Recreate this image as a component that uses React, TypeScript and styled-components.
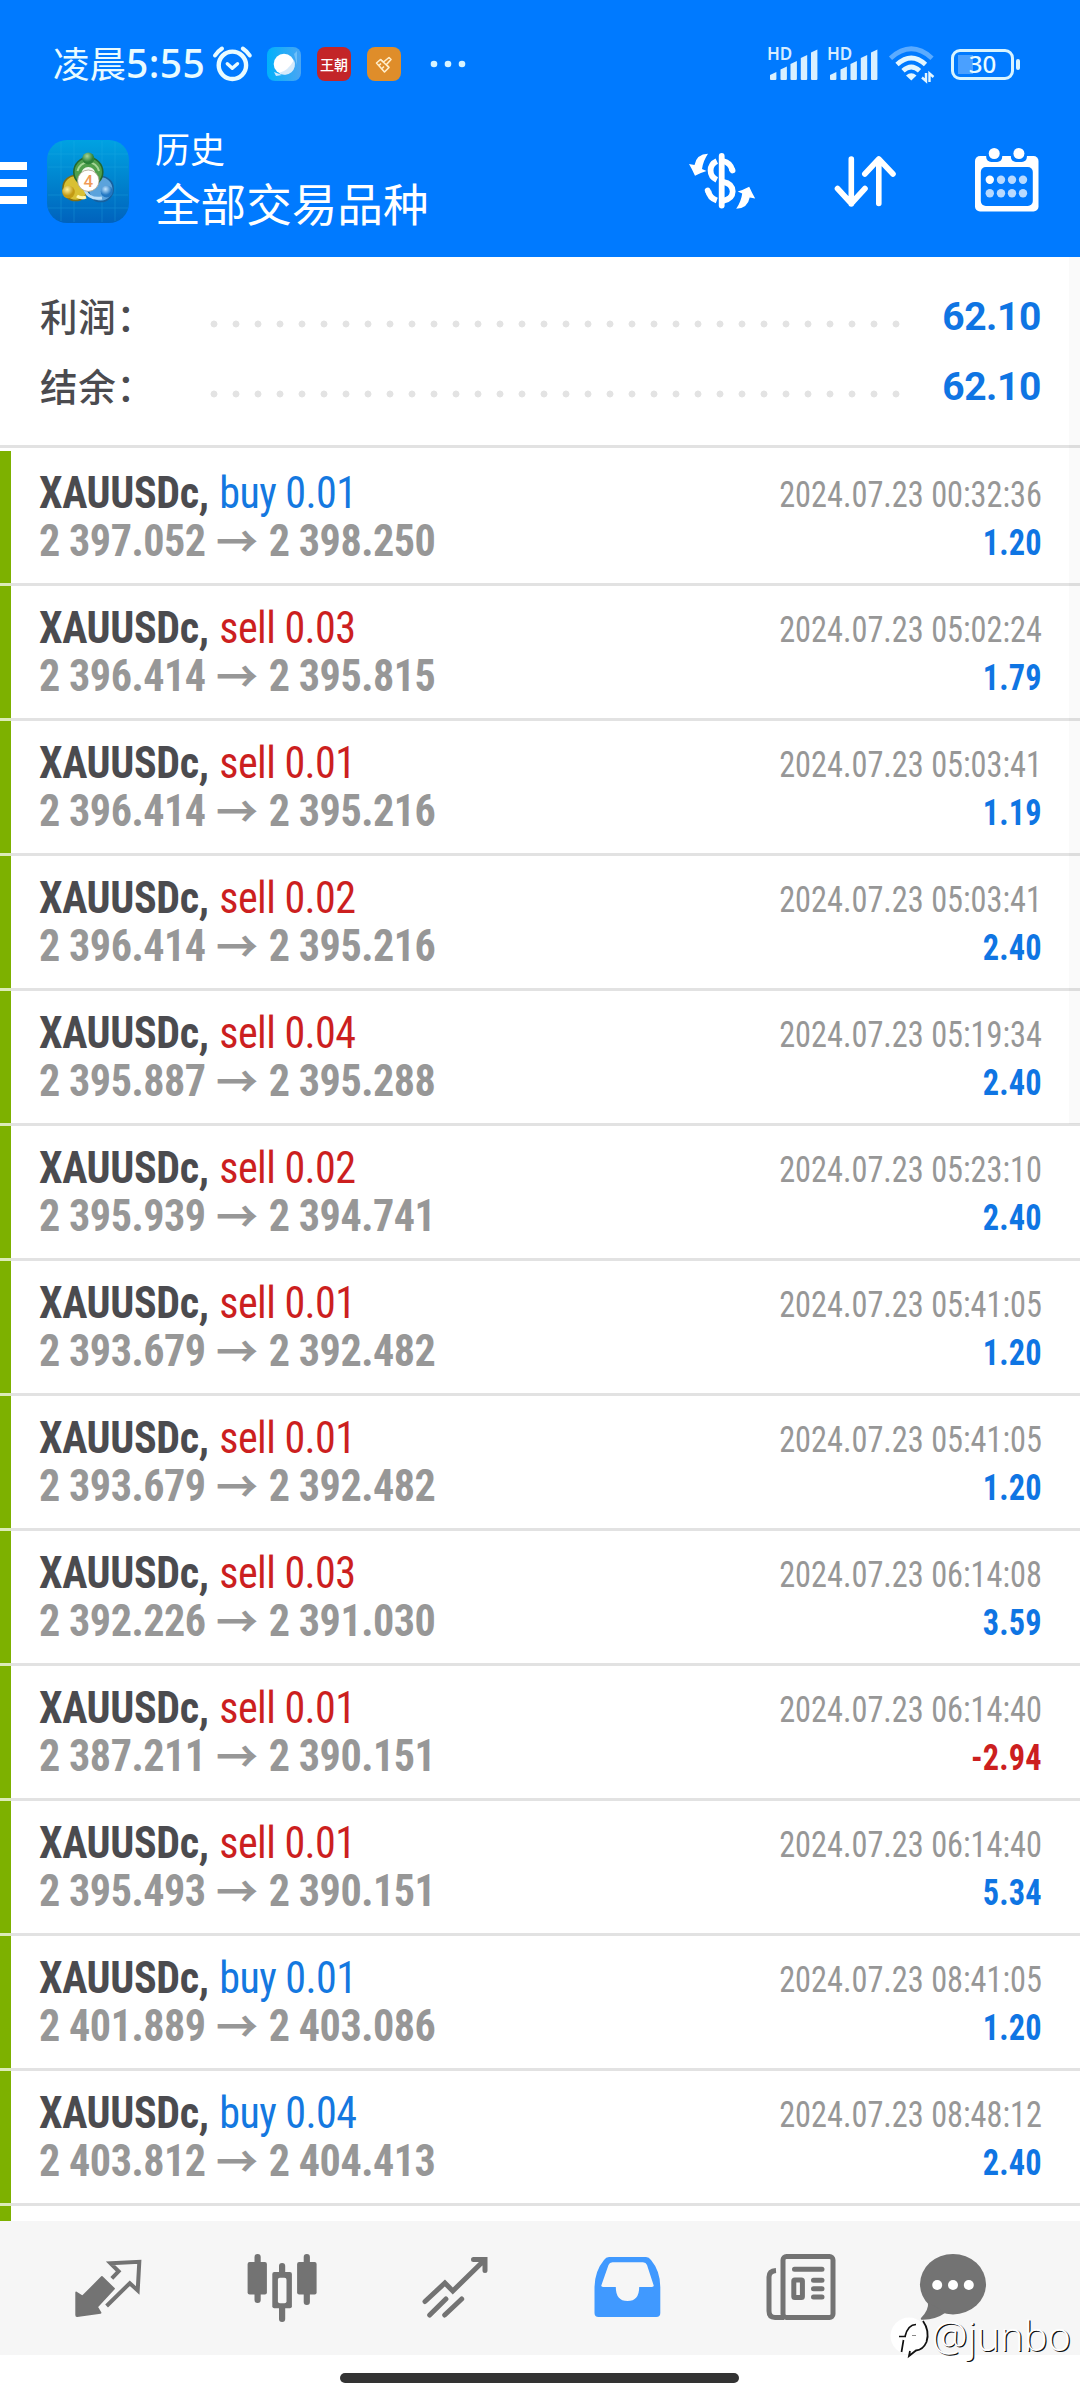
import React from 'react';
import styled, { createGlobalStyle } from 'styled-components';

const condensed = '"Roboto Condensed", Roboto, "Noto Sans CJK SC", sans-serif';
const cjk = '"Noto Sans CJK SC", sans-serif';
const BLUE = '#007aff';
const VALUE_BLUE = '#0f75e3';
const ICON_GREY = '#737373';

const Global = createGlobalStyle`
  html, body { margin: 0; background: #fff; }
  * { box-sizing: border-box; }
  svg { display: block; flex: none; overflow: visible; }
`;

const Screen = styled.div`
  position: relative;
  display: flex;
  flex-direction: column;
  width: 1080px;
  height: 2400px;
  overflow: hidden;
  background: #fff;
`;

const TopArea = styled.header`
  height: 257px;
  flex: none;
  background: ${BLUE};
  color: #fff;
`;

const StatusBar = styled.div`
  display: flex;
  align-items: center;
  height: 128px;
  padding: 0 59px 0 53px;
`;

const Clock = styled.div`
  display: flex;
  align-items: center;
  width: 159px;
  white-space: nowrap;
  color: #e9fbff;
`;

const ClockPrefix = styled.span`
  width: 73px;
  font: 400 36.5px/48px ${cjk};
  margin-top: -2px;
`;

const ClockDigits = styled.span`
  font: 500 39px/48px "Noto Sans", sans-serif;
  letter-spacing: 0.4px;
  margin-top: -2px;
`;

const MiniApps = styled.div`
  display: flex;
  gap: 16px;
  margin-left: 14px;
`;

const MiniApp = styled.div<{ $bg: string }>`
  display: flex;
  align-items: center;
  justify-content: center;
  width: 34px;
  height: 34px;
  border-radius: 8px;
  background: ${p => p.$bg};
  font: 500 14px/34px ${cjk};
  white-space: nowrap;
`;

const StatusRight = styled.div`
  display: flex;
  align-items: center;
  margin-left: auto;
`;

const Signal = styled.div`
  position: relative;
  width: 60px;
  height: 34px;
`;

const HdLabel = styled.span`
  position: absolute;
  left: -1px;
  top: -1px;
  font: 600 17px/16px "Noto Sans", sans-serif;
  color: #d5ecff;
`;

const Battery = styled.div`
  position: relative;
  display: flex;
  align-items: center;
  justify-content: center;
  width: 63px;
  height: 31px;
  margin: 0 7px 0 15px;
  border: 3px solid #d8f4ff;
  border-radius: 9px;
  background: linear-gradient(#4aa0ff, #4aa0ff) 4px 3px / 15px 19px no-repeat;
  font: 500 24px/24px "Noto Sans", sans-serif;
  color: #e9fbff;

  &::after {
    content: '';
    position: absolute;
    right: -9px;
    top: 7px;
    width: 4px;
    height: 11px;
    border-radius: 2px;
    background: #d8f4ff;
  }
`;

const TitleBar = styled.div`
  display: flex;
  align-items: flex-start;
  height: 129px;
`;

const MenuButton = styled.div`
  display: flex;
  flex-direction: column;
  gap: 9px;
  width: 27px;
  padding-top: 34px;
`;

const MenuLine = styled.span`
  height: 8px;
  background: #fff;
`;

const Logo = styled.div`
  margin: 12px 0 0 20px;
`;

const Titles = styled.div`
  width: 532px;
  padding-left: 26px;
  margin-top: -2px;
  white-space: nowrap;
`;

const Subtitle = styled.div`
  font: 400 35px/44px ${cjk};
`;

const Title = styled.div`
  margin-top: 3px;
  font: 400 45.6px/58px ${cjk};
`;

const Tools = styled.div`
  display: flex;
  align-items: flex-start;
`;

const Tool = styled.div<{ $left: number; $top: number }>`
  margin: ${p => p.$top}px 0 0 ${p => p.$left}px;
`;

const Summary = styled.section`
  display: flex;
  flex-direction: column;
  flex: none;
  height: 191px;
  padding: 24px 39px 0 40px;
  border-bottom: 3px solid #e2e2e2;
`;

const SummaryRow = styled.div`
  display: flex;
  align-items: center;
  height: 70px;
`;

const SummaryLabel = styled.div`
  width: 169px;
  margin-top: -3px;
  font: 500 37.5px/50px ${cjk};
  letter-spacing: 0.8px;
  color: #4b4b4f;
  white-space: nowrap;
`;

const Leader = styled.div`
  width: 704px;
  height: 8px;
  margin-top: 15px;
  background: radial-gradient(circle, #e3e3e3 3.1px, transparent 3.8px) -6px 0 / 22px 8px repeat-x;
`;

const SummaryValue = styled.div`
  margin: 2px 0 0 auto;
  font: 700 39px/50px Roboto, sans-serif;
  letter-spacing: -0.4px;
  color: ${VALUE_BLUE};
  white-space: nowrap;
`;

const List = styled.main`
  display: flex;
  flex-direction: column;
  height: 1773px;
  padding-top: 3px;
  overflow: hidden;
`;

const DealStripe = styled.div`
  flex: none;
  height: 3px;
  background: linear-gradient(90deg, #dcebb8 11px, #e2e2e2 11px);
`;

const DealRow = styled.article`
  display: flex;
  flex: none;
  justify-content: space-between;
  height: 132px;
  padding: 18px 38px 0 28px;
  border-left: 11px solid #7db100;
`;

const DealInfo = styled.div`
  transform: scaleX(0.957);
  transform-origin: 0 0;
  white-space: nowrap;
`;

const DealResult = styled.div`
  padding-top: 2px;
  text-align: right;
  transform: scaleX(0.897);
  transform-origin: 100% 0;
  white-space: nowrap;
`;

const Instrument = styled.div`
  font: 700 44px/48px ${condensed};
  letter-spacing: -0.4px;
  color: #4b4b4f;
`;

const Order = styled.span<{ $sell: boolean }>`
  margin-left: 1.5px;
  font-weight: 400;
  letter-spacing: -0.6px;
  color: ${p => (p.$sell ? '#cc1f1f' : '#1478e0')};
`;

const Prices = styled.div`
  display: flex;
  font: 700 44px/48px ${condensed};
  letter-spacing: -0.5px;
  color: #979797;
`;

const Arrow = styled.span`
  width: 66px;
  text-align: center;
  font: 700 44px/44px ${cjk};
  letter-spacing: 0;
`;

const Time = styled.div`
  font: 400 36px/48px ${condensed};
  color: #979797;
`;

const Profit = styled.div<{ $loss: boolean }>`
  font: 700 36px/48px ${condensed};
  letter-spacing: 0.2px;
  color: ${p => (p.$loss ? '#cc1f1f' : VALUE_BLUE)};
`;

const ScrollThumb = styled.div`
  position: absolute;
  right: 0;
  top: 257px;
  width: 11px;
  height: 867px;
  background: rgba(0, 0, 0, 0.02);
`;

const NavBar = styled.nav`
  display: grid;
  grid-template-columns: repeat(5, 173px) 133px;
  justify-items: center;
  flex: none;
  height: 134px;
  padding: 33px 0 0 22px;
  background: #f6f6f6;
`;

const HomeArea = styled.footer`
  display: flex;
  justify-content: center;
  padding: 18px 2px 0 0;
`;

const HomeBar = styled.div`
  width: 399px;
  height: 10px;
  border-radius: 5px;
  background: #333;
`;

const Watermark = styled.div`
  position: absolute;
  left: 890px;
  top: 2311px;
  display: flex;
  align-items: center;
  height: 52px;
  font: 300 40px/52px "Open Sans", "Noto Sans", sans-serif;
  color: #fff;
  text-shadow: 1.2px 1.2px 0.6px #111;
  white-space: nowrap;
`;

const WatermarkName = styled.span`
  margin: -3px 0 0 3px;
`;

type DealData = [side: 'buy' | 'sell', lots: string, open: string, close: string, time: string, profit: string];

const deals: DealData[] = [
  ['buy', '0.01', '2 397.052', '2 398.250', '2024.07.23 00:32:36', '1.20'],
  ['sell', '0.03', '2 396.414', '2 395.815', '2024.07.23 05:02:24', '1.79'],
  ['sell', '0.01', '2 396.414', '2 395.216', '2024.07.23 05:03:41', '1.19'],
  ['sell', '0.02', '2 396.414', '2 395.216', '2024.07.23 05:03:41', '2.40'],
  ['sell', '0.04', '2 395.887', '2 395.288', '2024.07.23 05:19:34', '2.40'],
  ['sell', '0.02', '2 395.939', '2 394.741', '2024.07.23 05:23:10', '2.40'],
  ['sell', '0.01', '2 393.679', '2 392.482', '2024.07.23 05:41:05', '1.20'],
  ['sell', '0.01', '2 393.679', '2 392.482', '2024.07.23 05:41:05', '1.20'],
  ['sell', '0.03', '2 392.226', '2 391.030', '2024.07.23 06:14:08', '3.59'],
  ['sell', '0.01', '2 387.211', '2 390.151', '2024.07.23 06:14:40', '-2.94'],
  ['sell', '0.01', '2 395.493', '2 390.151', '2024.07.23 06:14:40', '5.34'],
  ['buy', '0.01', '2 401.889', '2 403.086', '2024.07.23 08:41:05', '1.20'],
  ['buy', '0.04', '2 403.812', '2 404.413', '2024.07.23 08:48:12', '2.40'],
];

const AlarmIcon = () => (
  <svg width="41" height="38" viewBox="0 0 41 38" fill="none" stroke="#e9fbff" strokeLinecap="round" strokeLinejoin="round">
    <circle cx="20.4" cy="20.3" r="13.7" strokeWidth="4.4" />
    <path d="M15.3 18.7l5 4.6 5.2-4.6" strokeWidth="3.4" />
    <path d="M3 10.500q2.500-4 7-7M37.800 10.500q-2.500-4-7-7" strokeWidth="4" />
  </svg>
);

const GlobeIcon = () => (
  <svg width="34" height="34" viewBox="0 0 34 34">
    <path d="M27 7L30 4 30 18z" fill="#8fd0fb" opacity=".6" />
    <path d="M7 25l2 4 6-1z" fill="#cfeafd" />
    <circle cx="17" cy="17" r="10.300" fill="#fff" />
    <path d="M27 13a10.300 10.300 0 0 1-15 13Q21 24 27 13z" fill="#d5eafb" />
  </svg>
);

const BrushIcon = () => (
  <svg width="34" height="34" viewBox="0 0 34 34" fill="none" stroke="#ffeecb" strokeWidth="1.600" strokeLinejoin="round">
    <path d="M9.500 16L13.500 12.500 16.500 15 22 10.500 24 12.500 19.500 17.500 22 20.500 17.500 25z" />
    <path d="M13.500 12.500L22 20.500M12 18.500l2-2M15 21.500l2-2" />
  </svg>
);

const MoreDots = () => (
  <svg width="36" height="8" viewBox="0 0 36 8" fill="#d8f4ff" style={{ marginLeft: 29 }}>
    <circle cx="4" cy="4" r="3.300" /><circle cx="18" cy="4" r="3.300" /><circle cx="32" cy="4" r="3.300" />
  </svg>
);

const SignalBars = () => (
  <Signal>
    <HdLabel>HD</HdLabel>
    <svg width="60" height="34" viewBox="0 0 60 34" fill="#d8efff">
      {[[2, 25], [12.500, 19.500], [22.500, 14], [32.800, 8], [43, 2.500]].map(([x, y]) => (
        <path key={x} d={`M${x} ${y + 3}L${x + 6.400} ${y}V32q0 1-1 1H${x + 1}q-1 0-1-1z`} />
      ))}
    </svg>
  </Signal>
);

const WifiIcon = () => (
  <svg width="48" height="38" viewBox="0 0 48 38" fill="none" stroke="#e3f6ff" strokeWidth="4.800">
    <path d="M2.500 13.200Q23.300-5.500 44 13.200" opacity=".4" />
    <path d="M9 19.500Q23.300 6.500 37.500 19.500" />
    <path d="M15 25.800Q23.300 18.200 31.500 25.800" />
    <path d="M18 30.500q5.300-4.500 10.500 0l-5.200 5z" fill="#e3f6ff" stroke="none" />
    <path d="M38 28v8l-4-3.500M41.500 37v-8.500l4 3.500" strokeWidth="2.400" />
  </svg>
);

const AppLogo = () => (
  <svg width="82" height="83" viewBox="0 0 82 83">
    <defs>
      <linearGradient id="tile" x1="0" y1="0" x2="0" y2="1">
        <stop offset="0" stopColor="#00a2e2" /><stop offset=".55" stopColor="#0080cc" /><stop offset="1" stopColor="#0062bd" />
      </linearGradient>
      <radialGradient id="green" cx=".4" cy=".3"><stop offset="0" stopColor="#a8d49a" /><stop offset="1" stopColor="#2c8238" /></radialGradient>
      <radialGradient id="gold" cx=".4" cy=".3"><stop offset="0" stopColor="#fff3a0" /><stop offset="1" stopColor="#c39a14" /></radialGradient>
      <radialGradient id="azure" cx=".4" cy=".3"><stop offset="0" stopColor="#c4e6ff" /><stop offset="1" stopColor="#2277c2" /></radialGradient>
    </defs>
    <rect width="82" height="83" rx="20" fill="url(#tile)" />
    <path d="M14 2v79M27 1v81M55 1v81M68 2v79M1 14h80M1 27h80M1 55h80M1 68h80" stroke="#29b4e8" strokeWidth=".8" opacity=".35" />
    <g strokeWidth="1.600">
      <circle cx="53.700" cy="49" r="12.500" fill="#5ba3dc" stroke="#17609e" />
      <circle cx="28.500" cy="48" r="12.500" fill="#d9c033" stroke="#846f10" />
      <circle cx="41.300" cy="32" r="14.500" fill="#4f9f4c" stroke="#23682f" />
      <circle cx="41.300" cy="34" r="7" fill="#eef6ea" stroke="none" />
    </g>
    <path d="M30.500 31a11 11 0 0 1 21.500 0" fill="none" stroke="#a5d696" strokeWidth="2" />
    <path d="M30 56q4 3 9 1" fill="none" stroke="#fff5aa" strokeWidth="3" />
    <path d="M38 50q4 10 17 8" fill="none" stroke="#b9dffa" strokeWidth="3" />
    <circle cx="41.300" cy="18.500" r="6" fill="url(#green)" />
    <circle cx="21.500" cy="52" r="6.300" fill="url(#gold)" />
    <circle cx="59.700" cy="51.500" r="6" fill="url(#azure)" />
    <circle cx="41.300" cy="40.700" r="10.700" fill="#fff" stroke="#aaa18a" strokeWidth=".8" />
    <text x="41.300" y="46.800" textAnchor="middle" fontFamily="Roboto, sans-serif" fontSize="17" fontWeight="500" fill="#f09a58">4</text>
  </svg>
);

const swirl = 'M20 1.700Q8.500 2 6.500 13L1 12Q4 17 7 23.700 13 20.500 18.500 19L14 17Q15 9 20 1.700z';

const DollarIcon = () => (
  <svg width="68" height="58" viewBox="0 0 68 58" fill="#fff">
    <path d={swirl} /><path d={swirl} transform="rotate(180 34.100 29.200)" />
    <g fill="none" stroke="#fff" strokeWidth="5.800">
      <path d="M33.700 4v49.500" strokeLinecap="round" />
      <path d="M28.800 9.200C20.500 13 20.500 24 28.800 27.800" />
      <path d="M28.800 48.500Q21.500 46 20.300 39" />
      <path d="M19.700 38.500l.6 1.500" strokeLinecap="round" />
      <path d="M35 9Q42.500 10.500 44.500 18.500" /><path d="M44 17.500l.5 1" strokeLinecap="round" />
      <path d="M35 29.800Q44.500 31.500 44.700 39.500 44.500 47 35 48.800" />
    </g>
  </svg>
);

const SortIcon = () => (
  <svg width="62" height="53" viewBox="0 0 62 53" fill="none" stroke="#fff" strokeWidth="5.600" strokeLinecap="round" strokeLinejoin="round">
    <path d="M17.300 4v45M3.500 33.500L17.300 48.500 31 33.500M44.800 48.500V4M30.800 19L44.800 4 59 19" />
  </svg>
);

const CalendarIcon = () => (
  <svg width="64" height="65" viewBox="0 0 64 65" fill="#fff">
    <rect y="9" width="63.500" height="55.500" rx="5" />
    <rect x="5.800" y="20" width="52" height="39" rx="5" fill={BLUE} />
    {[19.200, 43.900].map(x => (
      <g key={x}>
        <rect x={x - 8} y="2" width="16" height="13" rx="5" fill={BLUE} />
        <circle cx={x} cy="6.500" r="5.500" />
      </g>
    ))}
    {[32.700, 46.300].map(y => [14.800, 26, 37, 48].map(x => (
      <circle key={`${x}-${y}`} cx={x} cy={y} r="4.200" opacity={x < 15 && y < 33 ? 1 : 0.72} />
    )))}
  </svg>
);

const QuotesIcon = () => (
  <svg width="77" height="66" viewBox="0 0 77 66">
    <path d="M31.900 23L44 34.700 27.100 53 30.500 58.800 7.100 62.200Q6.200 62 6.200 61V38.500L12.500 42.500z" fill={ICON_GREY} stroke={ICON_GREY} strokeWidth="1.800" strokeLinejoin="round" />
    <path d="M41.800 24.300L48.600 17.300 40.500 9.300 69.300 7.800 67.700 36.500 59.800 29.200 36.600 52" fill="none" stroke={ICON_GREY} strokeWidth="4" />
  </svg>
);

const CandlesIcon = () => (
  <svg width="72" height="68" viewBox="0 0 72 68" fill={ICON_GREY}>
    <rect x="8.500" width="6.200" height="49" rx="3" /><rect x="1.600" y="8" width="19.300" height="32.500" rx="2" />
    <rect x="57.700" width="6.200" height="51" rx="3" /><rect x="51.100" y="8" width="19.500" height="32.500" rx="2" />
    <rect x="33" y="9" width="6.200" height="59" rx="3" /><rect x="26.300" y="18" width="19.600" height="36.300" rx="2" />
    <rect x="31.900" y="23.700" width="8.600" height="25.500" rx="2" fill="#f6f6f6" />
  </svg>
);

const TrendIcon = () => (
  <svg width="68" height="66" viewBox="0 0 68 66" fill="none" stroke={ICON_GREY} strokeWidth="5" strokeLinecap="round">
    <path d="M4 47.500L23.900 29 31.800 37 63.500 6M52.500 5.500H64V16.500M8.700 61L24.900 45M23.700 61L40.700 45" />
  </svg>
);

const InboxIcon = () => (
  <svg width="67" height="66" viewBox="0 -3 67 66" fill="#4099ff">
    <path fillRule="evenodd" d="M15 0H52Q55 0 57 3 66.300 14 66.300 30V56Q66.300 60 62.300 60H4.600Q.5 60 .5 56V30Q.8 14 10 3 12 0 15 0zM18.500 5.300Q15.500 5.300 14.500 8L7.300 28.500Q7 30 9 30H21.800Q21.800 44 33.500 44 45.200 44 45.200 30H58Q60 30 59.700 28.500L53 8Q52 5.300 49 5.300z" />
  </svg>
);

const NewsIcon = () => (
  <svg width="70" height="66" viewBox="0 0 70 66" fill="none" stroke={ICON_GREY} strokeWidth="5">
    <rect x="17" y="2.600" width="50" height="60.800" rx="3.500" />
    <path d="M10 16.500Q3 17 3 23V57Q3 63.400 9 63.400H18" />
    <path d="M28.500 15.300H56M47.500 26.300H56M47.500 34.700H56M47.500 43H56" strokeLinecap="round" />
    <rect x="27.800" y="26" width="8.600" height="17.600" rx="1" />
  </svg>
);

const ChatIcon = () => (
  <svg width="67" height="66" viewBox="0 0 67 66" fill={ICON_GREY}>
    <ellipse cx="33" cy="30.200" rx="33" ry="30.200" />
    <path d="M8 48Q9 56 1 64 0 66 3 65.700 16 65.500 25 59z" />
    <g fill="#fff"><circle cx="17.200" cy="31" r="5" /><circle cx="33" cy="31" r="5" /><circle cx="48.800" cy="31" r="5" /></g>
  </svg>
);

const WatermarkBadge = () => (
  <svg width="39" height="42" viewBox="0 0 39 42" fill="none">
    <circle cx="19" cy="20" r="18.500" fill="#fff" />
    <path d="M9 20.500H16M15 20.500Q18 8.500 26 8.500M13.500 24L11.500 36" stroke="#111" strokeWidth="1.700" />
    <path d="M33 5Q40 15 36.500 26 33 34 26 34.500L19 40 20 35" stroke="#111" strokeWidth="1.800" />
    <path d="M22 19.500h4" stroke="#888" />
  </svg>
);

export default function App() {
  return (
    <Screen>
      <Global />
      <TopArea>
        <StatusBar>
          <Clock><ClockPrefix>凌晨</ClockPrefix><ClockDigits>5:55</ClockDigits></Clock>
          <AlarmIcon />
          <MiniApps>
            <MiniApp $bg="linear-gradient(90deg, #00b1fb, #4aa5f3)"><GlobeIcon /></MiniApp>
            <MiniApp $bg="#c32528">王朝</MiniApp>
            <MiniApp $bg="#df8d2a"><BrushIcon /></MiniApp>
          </MiniApps>
          <MoreDots />
          <StatusRight>
            <SignalBars /><SignalBars />
            <WifiIcon />
            <Battery>30</Battery>
          </StatusRight>
        </StatusBar>
        <TitleBar>
          <MenuButton><MenuLine /><MenuLine /><MenuLine /></MenuButton>
          <Logo><AppLogo /></Logo>
          <Titles>
            <Subtitle>历史</Subtitle>
            <Title>全部交易品种</Title>
          </Titles>
          <Tools>
            <Tool $left={27} $top={24}><DollarIcon /></Tool>
            <Tool $left={78} $top={27}><SortIcon /></Tool>
            <Tool $left={79} $top={19}><CalendarIcon /></Tool>
          </Tools>
        </TitleBar>
      </TopArea>
      <Summary>
        {['利润：', '结余：'].map(label => (
          <SummaryRow key={label}>
            <SummaryLabel>{label}</SummaryLabel>
            <Leader />
            <SummaryValue>62.10</SummaryValue>
          </SummaryRow>
        ))}
      </Summary>
      <List>
        {deals.map(([side, lots, open, close, time, profit], i) => (
          <React.Fragment key={i}>
            <DealRow>
              <DealInfo>
                <Instrument>XAUUSDc, <Order $sell={side === 'sell'}>{side} {lots}</Order></Instrument>
                <Prices>{open}<Arrow>→</Arrow>{close}</Prices>
              </DealInfo>
              <DealResult>
                <Time>{time}</Time>
                <Profit $loss={profit.startsWith('-')}>{profit}</Profit>
              </DealResult>
            </DealRow>
            <DealStripe />
          </React.Fragment>
        ))}
        <DealRow />
      </List>
      <NavBar>
        <QuotesIcon /><CandlesIcon /><TrendIcon /><InboxIcon /><NewsIcon /><ChatIcon />
      </NavBar>
      <HomeArea><HomeBar /></HomeArea>
      <ScrollThumb />
      <Watermark><WatermarkBadge /><WatermarkName>@junbo</WatermarkName></Watermark>
    </Screen>
  );
}
